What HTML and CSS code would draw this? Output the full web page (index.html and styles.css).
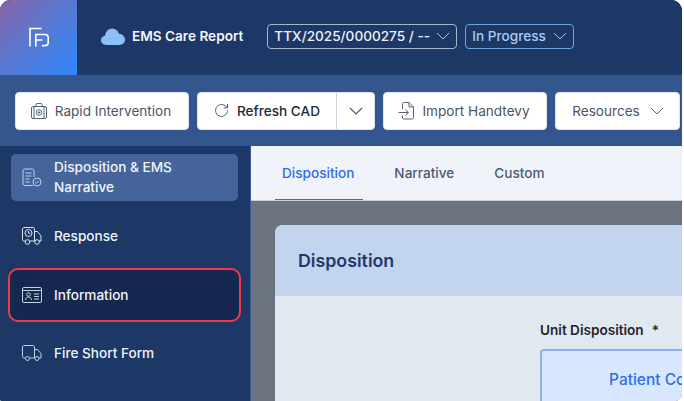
FILE: index.html
```html
<!DOCTYPE html>
<html lang="en">
<head>
<meta charset="utf-8">
<title>EMS Care Report</title>
<link rel="stylesheet" href="styles.css">
</head>
<body>
<div class="window">
  <header class="topbar">
    <div class="logo">
      <svg width="22" height="22" viewBox="0 0 22 22" fill="none" stroke="#fff" stroke-width="1.600"><path d="M2 19.500V1.500H13.500"/><path d="M7.800 19.500V7.500H17C19 7.500 20.200 8.700 20.200 10.500V15.500C20.200 17.300 19 18.600 17 18.600H14"/><path d="M7.800 13H14.500"/></svg>
    </div>
    <div class="brand">
      <svg width="24" height="17" viewBox="0 0 24 17"><path fill="#8cc0fb" d="M5.500 17C2.500 17 0 15 0 12.300C0 9.900 1.700 8.100 4 7.700C4.700 3.300 7.700 0.500 11.300 0.500C14.600 0.500 17 2.600 18 5.700C21.400 6 24 8.500 24 11.600C24 14.800 21.500 17 18.300 17Z"/></svg>
      <span class="brand-name">EMS Care Report</span>
    </div>
    <div class="pill pill-id"><span>TTX/2025/0000275 / --</span>
      <svg class="chev" width="14" height="8" viewBox="0 0 14 8" fill="none" stroke="#b4c0d2" stroke-width="1"><path d="M1 1L7 7L13 1"/></svg>
    </div>
    <div class="pill pill-status"><span>In Progress</span>
      <svg class="chev" width="14" height="8" viewBox="0 0 14 8" fill="none" stroke="#9fc3ee" stroke-width="1"><path d="M1 1L7 7L13 1"/></svg>
    </div>
  </header>

  <div class="toolbar">
    <button class="btn btn-rapid">
      <svg width="16" height="16" viewBox="0 0 16 16" fill="none" stroke="#5a6475" stroke-width="1"><rect x="0.500" y="3.500" width="15" height="12" rx="1.500"/><path d="M3 3.500V15.500M13 3.500V15.500M5 3.500V1.500C5 1 5.500 0.500 6 0.500H10C10.500 0.500 11 1 11 1.500V3.500"/><circle cx="8" cy="9.500" r="2.800"/><path d="M8 8.200V10.800M6.700 9.500H9.300"/></svg>
      <span>Rapid Intervention</span>
    </button>
    <div class="btn split">
      <div class="split-main">
        <svg width="15" height="15" viewBox="0 0 15 15" fill="none" stroke="#5a6475" stroke-width="1"><path d="M13.500 7.500A6 6 0 1 1 11.600 3.100L13.500 4.800"/><path d="M13.500 1V4.800H9.800"/></svg>
        <span>Refresh CAD</span>
      </div>
      <div class="split-arrow">
        <svg width="14" height="8" viewBox="0 0 14 8" fill="none" stroke="#4b5565" stroke-width="1.100"><path d="M1 1L7 7L13 1"/></svg>
      </div>
    </div>
    <button class="btn btn-import">
      <svg width="17" height="18" viewBox="0 0 17 18" fill="none" stroke="#5a6475" stroke-width="1"><path d="M4.500 7V1.500C4.500 1 5 0.500 5.500 0.500H11L15.500 5V15.500C15.500 16.500 15 17 14 17H5.500C5 17 4.500 16.500 4.500 16V13.500"/><path d="M11 0.500V5H15.500"/><path d="M0.500 10.500H10.500M7.500 7.500L10.500 10.500L7.500 13.500"/></svg>
      <span>Import Handtevy</span>
    </button>
    <button class="btn btn-res">
      <span>Resources</span>
      <svg width="14" height="8" viewBox="0 0 14 8" fill="none" stroke="#5a6475" stroke-width="1"><path d="M1 1L7 7L13 1"/></svg>
    </button>
  </div>

  <div class="body">
    <nav class="sidebar">
      <a class="nav-item active">
        <svg width="20" height="19" viewBox="0 0 20 19" fill="none" stroke="#c5d0e2" stroke-width="1"><path d="M11 17.500H3C1.800 17.500 1 16.700 1 15.500V3C1 1.800 1.800 1 3 1H10C11.200 1 12 1.800 12 3V9"/><path d="M3.500 5H9.500M3.500 8H9.500M3.500 11H7.500M3.500 14H7.500"/><circle cx="15" cy="14" r="4"/><path d="M13.300 14L14.500 15.200L16.700 13"/></svg>
        <span class="nav-label-two">Disposition &amp; EMS Narrative</span>
      </a>
      <a class="nav-item">
        <svg width="20" height="18" viewBox="0 0 20 18" fill="none" stroke="#dbe3ee" stroke-width="1"><path d="M3 14H2C1.200 14 0.500 13.300 0.500 12.500V2C0.500 1.200 1.200 0.500 2 0.500H11C11.800 0.500 12.500 1.200 12.500 2V14H8"/><path d="M12.500 4.500H15.500L19 9V14H17"/><path d="M12.500 14H13"/><circle cx="5.500" cy="15" r="2.300"/><circle cx="15" cy="15" r="2.300"/><circle cx="6.500" cy="6" r="3.500"/><path d="M6.500 4V6.200H8.200"/></svg>
        <span>Response</span>
      </a>
      <a class="nav-item highlight">
        <svg width="20" height="16" viewBox="0 0 20 16" fill="none" stroke="#c5d0e2" stroke-width="1"><rect x="0.500" y="0.500" width="19" height="15" rx="1.500"/><path d="M0.500 3.500H19.500"/><circle cx="6.500" cy="7.500" r="1.800"/><path d="M3.500 13C3.500 11 5 10.200 6.500 10.200C8 10.200 9.500 11 9.500 13"/><path d="M12 7H17M12 9.500H17M12 12H17"/></svg>
        <span>Information</span>
      </a>
      <a class="nav-item">
        <svg width="20" height="16" viewBox="0 0 20 16" fill="none" stroke="#c5d0e2" stroke-width="1"><path d="M3 13H2C1.200 13 0.500 12.300 0.500 11.500V2C0.500 1.200 1.200 0.500 2 0.500H11C11.800 0.500 12.500 1.200 12.500 2V13H8"/><path d="M12.500 4.500H15.500L19 8.500V13H17"/><circle cx="5.500" cy="13.500" r="2"/><circle cx="15" cy="13.500" r="2"/></svg>
        <span>Fire Short Form</span>
      </a>
    </nav>
    <main class="content">
      <div class="tabs">
        <a class="tab current">Disposition</a>
        <a class="tab">Narrative</a>
        <a class="tab">Custom</a>
      </div>
      <div class="stage">
        <section class="card">
          <h2 class="card-title">Disposition</h2>
          <div class="card-body">
            <div class="field">
              <label class="field-label">Unit Disposition<span class="req">*</span></label>
              <div class="option">Patient Contact</div>
            </div>
          </div>
        </section>
      </div>
    </main>
  </div>
</div>
</body>
</html>
```
FILE: styles.css
```css
* { box-sizing: border-box; }
html, body { margin: 0; height: 100%; background: #fff; overflow: hidden; }
body { font-family: Inter, "Liberation Sans", sans-serif; }
.window {
  width: 682px; height: 401px; display: flex; flex-direction: column;
  overflow: hidden; border-radius: 11px 11px 8px 2px;
  background: #1d3766;
}
.topbar { height: 75px; flex: none; display: flex; align-items: center; background: #1d3766; }
.logo {
  width: 77px; height: 75px; display: flex; align-items: center; justify-content: center;
  background: linear-gradient(135deg, #8b62a8 0%, #5a78cf 45%, #2f86fb 100%);
}
.brand { display: flex; align-items: center; gap: 7px; margin: 0 0 3px 24px; }
.brand-name { color: #f3f6fb; font-size: 13.600px; font-weight: 600; white-space: nowrap; }
.pill {
  height: 25px; display: flex; align-items: center; border-radius: 4px; flex: none;
  font-size: 13.600px; font-weight: 500; padding: 0 6px; white-space: nowrap;
  justify-content: space-between; margin-bottom: 3px;
}
.pill-id { width: 190px; margin-left: 24px; border: 1px solid #a9b5c8; color: #eef2f7; }
.pill-status { width: 109px; margin-left: 8px; border: 1px solid #6fa4e4; color: #a9ccf5; }
.chev { flex: none; }
.toolbar { height: 71px; flex: none; display: flex; align-items: center; gap: 8px; padding: 0 0 0 15px; background: #34568f; }
.btn {
  height: 38px; display: flex; align-items: center; background: #fff; border: 1px solid #dfe5ee;
  border-radius: 4px; font-family: inherit; font-size: 13.600px; color: #4b5565; padding: 0;
}
.btn-rapid { width: 174px; justify-content: center; gap: 8px; padding-right: 2px; }
.split { width: 178px; color: #1f2733; font-weight: 450; }
.split-main { width: 139px; display: flex; justify-content: center; align-items: center; gap: 8px; height: 100%; border-right: 1px solid #c9d2df; }
.split-arrow { flex: 1; display: flex; align-items: center; justify-content: center; }
.btn-import { width: 164px; justify-content: center; gap: 7px; padding-right: 2px; }
.btn-res { width: 125px; justify-content: center; gap: 10px; padding-left: 1px; }
.body { flex: 1; display: flex; min-height: 0; }
.sidebar { width: 250px; flex: none; background: #1d3766; padding: 8px 8px 0 8px; display: flex; flex-direction: column; gap: 8px; }
.nav-item {
  height: 48px; flex: none; display: flex; align-items: center; gap: 12px; padding: 0 12px;
  color: #f0f4f9; font-size: 13.600px; font-weight: 500; line-height: 20px; border-radius: 5px;
  border: 2px solid transparent;
}
.nav-item svg { flex: none; }
.nav-label-two { margin-bottom: 2px; }
.nav-item.active { background: #45659a; margin: 0 4px 3px 3px; padding: 0 12px 0 11px; border: 0; height: 47px; }
.nav-item.highlight { background: #142850; border-color: #ee3a48; border-radius: 10px; height: 54px; margin: 0 1px -1px 0; }
.content { flex: 1; min-width: 0; display: flex; flex-direction: column; border-left: 1px solid #3d5d95; }
.tabs { height: 55px; flex: none; display: flex; background: #f0f4fa; padding-left: 24px; border-bottom: 1px solid #c7ced9; }
.tab { height: 54px; display: flex; align-items: center; padding: 0 9px 0 7px; margin-right: 24px; font-size: 13.600px; font-weight: 500; color: #4d5a6c; }
.tab.current { color: #2f6bec; border-bottom: 1px solid #2f6bec; }
.stage { flex: 1; min-height: 0; background: #6b7280; padding: 24px 0 0 24px; }
.card { height: 200px; background: #e2e8f0; border-radius: 8px 0 0 0; overflow: hidden; }
.card-title { height: 71px; margin: 0; padding-left: 23px; display: flex; align-items: center; background: #c3d4ee; color: #21396a; font-size: 17.800px; font-weight: 600; }
.card-body { padding: 26px 0 0 265px; }
.field { width: 300px; }
.field-label { display: block; font-size: 13.600px; font-weight: 600; color: #1d2430; height: 18px; white-space: nowrap; }
.req { margin-left: 8px; }
.option {
  margin-top: 9px; height: 70px; background: #d9e7fe; border: 2px solid #8db1f3; border-radius: 4px;
  color: #2f6bec; font-size: 15.500px; font-weight: 500; padding: 19px 0 0 67px; white-space: nowrap;
}
```
